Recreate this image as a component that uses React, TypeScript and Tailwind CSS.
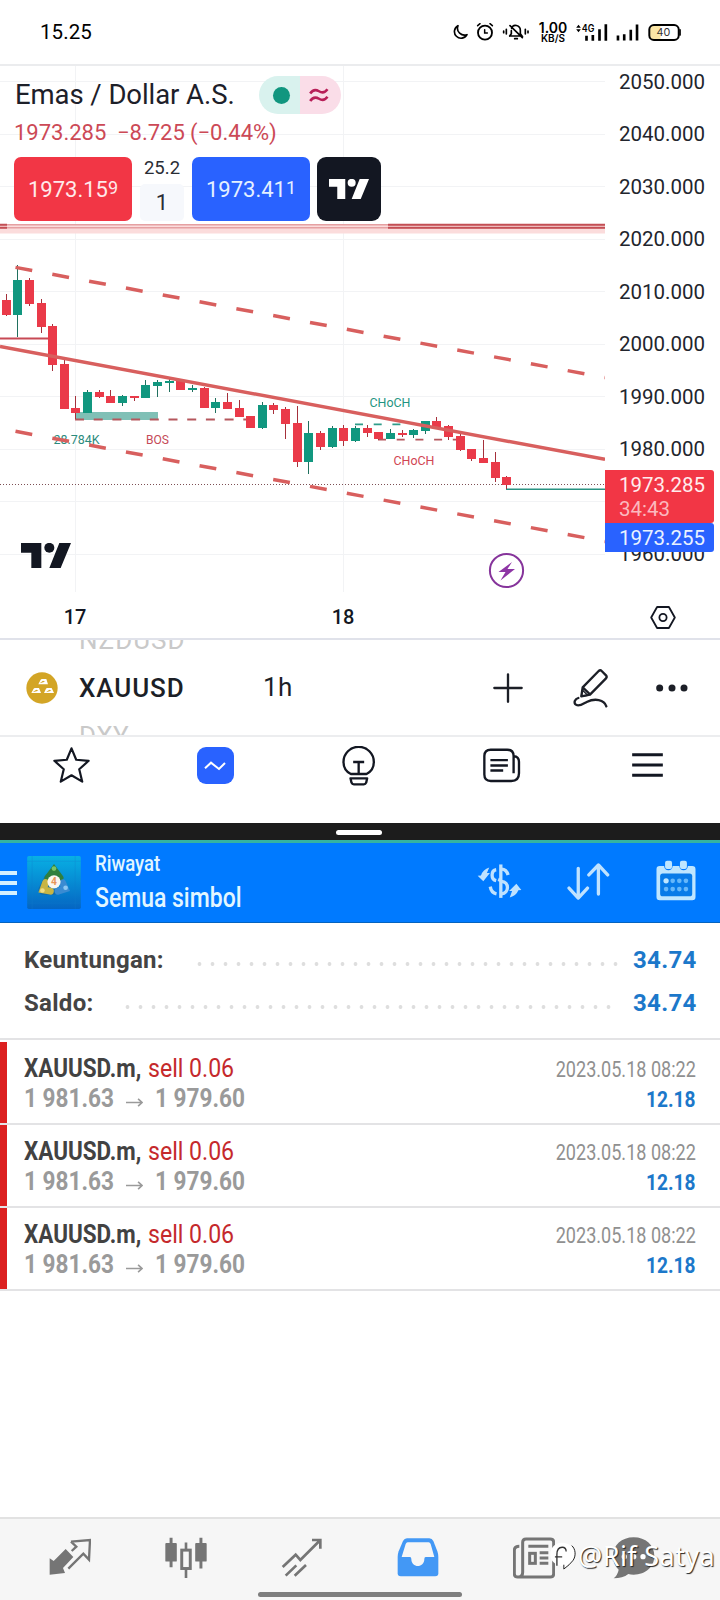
import type { ReactNode } from "react";

type Candle = [x: number, high: number, top: number, bottom: number, low: number, up?: boolean];

const candles: Candle[] = [
  [6.5, 294, 300, 315, 316],
  [17.5, 265, 280, 315, 337, true],
  [29.5, 278, 280, 304, 306],
  [41.5, 299, 303, 327, 333],
  [52.5, 324, 326, 365, 371],
  [64.5, 358, 364, 409, 409],
  [75.5, 396, 408, 413, 419],
  [87.5, 390, 392, 413, 413, true],
  [99.5, 390, 392, 397, 398],
  [110.5, 390, 396, 403, 403],
  [122.5, 395, 396, 403, 406, true],
  [134.5, 396, 396, 398, 401],
  [145.5, 380, 385, 398, 398, true],
  [157.5, 380, 382, 386, 397, true],
  [169.5, 379, 381, 383, 392, true],
  [180.5, 380, 381, 390, 390],
  [192.5, 385, 388, 390, 392, true],
  [204.5, 387, 388, 408, 408],
  [215.5, 398, 402, 408, 413, true],
  [227.5, 393, 402, 409, 409],
  [239.5, 400, 408, 417, 417],
  [250.5, 416, 416, 428, 428],
  [262.5, 402, 405, 428, 429, true],
  [273.5, 403, 405, 410, 414],
  [285.5, 407, 409, 424, 439],
  [297.5, 406, 423, 462, 467],
  [308.5, 421, 433, 462, 474, true],
  [320.5, 431, 433, 447, 450],
  [332.5, 426, 428, 447, 448, true],
  [343.5, 425, 428, 441, 446],
  [355.5, 426, 428, 441, 442, true],
  [367.5, 425, 428, 433, 437],
  [378.5, 432, 432, 439, 440],
  [390.5, 429, 433, 439, 439, true],
  [402.5, 430, 433, 435, 437],
  [413.5, 429, 430, 435, 438, true],
  [425.5, 421, 421, 431, 434, true],
  [436.5, 417, 421, 428, 428],
  [448.5, 425, 426, 437, 440],
  [460.5, 433, 436, 450, 451],
  [471.5, 449, 449, 459, 461],
  [483.5, 440, 458, 463, 463],
  [495.5, 452, 462, 478, 482],
  [506.5, 476, 477, 485, 489],
];

const prices = [
  "2050.000",
  "2040.000",
  "2030.000",
  "2020.000",
  "2010.000",
  "2000.000",
  "1990.000",
  "1980.000",
  "1970.000",
  "1960.000",
];

const trades = [1, 2, 3];

function TvLogo({ className }: { className: string }) {
  return (
    <svg viewBox="62 189 150 75" className={className} fill="currentColor">
      <path d="M62 189h61v75H93v-46H62zM177 189h35l-31 75h-34z" />
      <circle cx="147" cy="203.500" r="15" />
    </svg>
  );
}

function StatusBar() {
  return (
    <header className="flex h-[66px] items-center justify-between border-b-2 border-[#ebecee] pl-10 pr-[38px] text-black">
      <span className="text-[20.5px] tracking-[0.1px]">15.25</span>
      <div className="flex items-center">
        <svg viewBox="217 72 48 48" className="h-4 w-4" fill="none" stroke="currentColor" strokeWidth="5" strokeLinejoin="round">
          <path d="M235 77a20 20 0 1 0 27 27c-16 6-34-9-27-27z" />
        </svg>
        <svg viewBox="288 70 54 54" className="ml-2 h-[18px] w-[18px]" fill="none" stroke="currentColor" strokeWidth="5.500" strokeLinecap="round">
          <circle cx="315" cy="99" r="21" />
          <path d="M314 90v10h8M293 78l7-6M330 72l7 6" strokeWidth="4.500" />
        </svg>
        <svg viewBox="366 70 84 54" className="ml-2 h-[18px] w-7" fill="none" stroke="currentColor" strokeWidth="5" strokeLinecap="round">
          <path d="M371 94v5M379 89v14M436 89v14M444 94v5M389 109h37l-5-7V92c0-16-22-21-26-6M394 93v9l-5 7M390 78l37 36M404 117h8" />
        </svg>
        <div className="ml-2 flex w-[30px] flex-col items-center text-center font-['Inter'] font-semibold">
          <span className="text-[14px] leading-[12px]">1.00</span>
          <span className="text-[10px] leading-[9px]">KB/S</span>
        </div>
        <svg viewBox="582 68 98 54" className="ml-[7px] h-[18px] w-[33px]" fill="currentColor">
          <path d="M585 82l7-9 7 9zM585 87l7 9 7-9z" />
          <text x="602" y="95" fontSize="29" fontWeight="600" fontFamily="Inter" textLength="38" lengthAdjust="spacingAndGlyphs">4G</text>
          <path d="M612 106h8v15h-8zM631 104h8v17h-8zM651 87h8v34h-8zM670 72h8v49h-8z" />
        </svg>
        <svg viewBox="706 68 70 54" className="ml-2 h-[18px] w-[23px]" fill="currentColor">
          <path d="M708 106h8v15h-8zM727 102h8v19h-8zM747 88h8v33h-8zM766 72h8v49h-8z" />
        </svg>
        <svg viewBox="803 70 102 52" className="ml-[9px] h-[17px] w-[34px]" fill="none">
          <path d="M820 75h20v42h-20q-12 0-12-12V87q0-12 12-12z" fill="#fbe6a6" />
          <rect x="806" y="73" width="90" height="46" rx="14" stroke="currentColor" strokeWidth="6" />
          <path d="M900 88v16" stroke="currentColor" strokeWidth="5" strokeLinecap="round" />
          <text x="849" y="107" fontSize="33" fill="#333" textAnchor="middle" fontFamily="Inter">40</text>
        </svg>
      </div>
    </header>
  );
}

function Chart() {
  return (
    <svg viewBox="0 66 605 526" className="block h-[526px] w-[605px]" fontFamily="Roboto">
      <g stroke="#f2f3f5">
        {prices.map((p, i) => (
          <path key={p} d={`M0 ${Math.round(81 + i * 52.5) + 0.5}H605`} />
        ))}
        <path d="M75.500 66V592M343.500 66V592" />
      </g>

      <path d="M0 224h605v9.500H0z" fill="#fbdcdc" />
      <path d="M0 224.800h605M0 227.700h605" stroke="#e5a0a2" strokeWidth="1.600" />
      <path d="M0 224.800h7M388 224.800h217M0 227.700h7M388 227.700h217" stroke="#c34f55" strokeWidth="2" />

      <path d="M76 412h82v8H76z" fill="#80c0b6" />
      <path d="M75 419.500H250" stroke="#b5575d" strokeWidth="2" strokeDasharray="9 9.700" />
      <path d="M0 338.600H48" stroke="#c74955" strokeWidth="2" />
      <path d="M355 424.400H403" stroke="#2f9c8a" strokeWidth="1.800" strokeDasharray="8 10.700" />
      <path d="M378 439.700H457" stroke="#b5575d" strokeWidth="1.800" strokeDasharray="8 10.700" />
      <path d="M0 484.500H605" stroke="#7d5055" strokeDasharray="1 2" />
      <path d="M506 489.300H605" stroke="#2a9483" strokeWidth="1.500" />

      {candles.map(([x, high, top, bottom, low, up]) => (
        <g key={x} fill={up ? "#11977f" : "#ea3a49"}>
          <rect x={x - 0.5} y={high} width="1" height={low - high} fill={up ? "#20705f" : "#a5303b"} />
          <rect x={x - 4.5} y={top} width="9" height={bottom - top} />
        </g>
      ))}

      <g fontSize="12.500" textAnchor="middle">
        <text x="76.500" y="444" fill="#2b8b7d" textLength="46" lengthAdjust="spacingAndGlyphs">28.784K</text>
        <text x="157.500" y="444" fill="#c54a58" textLength="23" lengthAdjust="spacingAndGlyphs">BOS</text>
        <text x="390" y="407" fill="#1f9482" textLength="41" lengthAdjust="spacingAndGlyphs">CHoCH</text>
        <text x="414" y="465" fill="#d14452" textLength="41" lengthAdjust="spacingAndGlyphs">CHoCH</text>
      </g>

      <g stroke="#d85f5e" strokeWidth="3.500">
        <path d="M0 346.400L605 459.400" />
        <path d="M15.500 267.400L605 377.600M15.500 431.300L605 541.500" strokeDasharray="17 20.450" />
      </g>

      <circle cx="506.500" cy="570.500" r="16.600" fill="#fff" stroke="#86349b" strokeWidth="2" />
      <path d="M512 562l-13.500 10h7l-5 8.500 14.500-11.500h-7.500z" fill="#8e35a5" />
    </svg>
  );
}

function Legend() {
  return (
    <div className="absolute left-[14px] top-[10px]">
      <div className="flex h-[38px] items-center">
        <h1 className="w-[245px] whitespace-nowrap pl-px text-[27.5px] tracking-[-0.07px] text-[#1d2029]">Emas / Dollar A.S.</h1>
        <div className="flex h-[38px] overflow-hidden rounded-full">
          <div className="flex w-[41px] items-center justify-center bg-[#d9f2ee]">
            <div className="ml-[3px] h-[17px] w-[17px] rounded-full bg-[#11967f]" />
          </div>
          <div className="flex w-[41px] items-center bg-[#fadde8] pl-[9px]">
            <svg viewBox="0 0 60 46" className="h-[15px] w-5" fill="none" stroke="#b81f58" strokeWidth="8">
              <path d="M3 17C12 3 22 5 30 10S48 15 56 4M3 40C12 26 22 28 30 33S48 38 56 27" />
            </svg>
          </div>
        </div>
      </div>
      <p className="flex h-9 items-center whitespace-nowrap text-[22px] text-[#cc4956]">
        <span className="w-[103px]">1973.285</span>
        <span className="w-[73px]">−8.725</span>
        <span>(−0.44%)</span>
      </p>
      <div className="mt-[7px] flex h-16">
        <button className="flex w-[118px] items-center justify-center rounded-[7px] bg-[#f23645] text-[22px] text-[#ffe9ea]">
          1973.15<span className="mb-1 text-[18px]">9</span>
        </button>
        <div className="mx-2 flex w-11 flex-col items-center text-[#2a2d35]">
          <span className="h-[27px] text-[18.5px] leading-[22px]">25.2</span>
          <span className="flex h-[37px] w-full items-center justify-center rounded-[5px] bg-[#f6f8fc] text-[22px]">1</span>
        </div>
        <button className="flex w-[118px] items-center justify-center rounded-[7px] bg-[#2962ff] text-[22px] text-[#e4f0ff]">
          1973.41<span className="mb-1 text-[18px]">1</span>
        </button>
        <button className="ml-[7px] flex w-16 items-center justify-center rounded-[9px] bg-[#131722] text-white">
          <TvLogo className="h-[20px] w-[40px]" />
        </button>
      </div>
    </div>
  );
}

function PriceAxis() {
  return (
    <div className="relative w-[115px] text-[20.5px] text-[#22252d]">
      <ul className="-mt-[10px]">
        {prices.map((price) => (
          <li key={price} className="flex h-[52.5px] items-center pl-[14px]">
            {price}
          </li>
        ))}
      </ul>
      <div className="absolute left-0 top-[404px] w-[109px]">
        <div className="h-[53px] rounded-r-[3px] bg-[#f23645] pl-[14px] pt-[3px] leading-6 text-[#ffeced]">
          <p>1973.285</p>
          <p className="text-[#fbb9bf]">34:43</p>
        </div>
        <div className="flex h-[29px] items-center rounded-r-[3px] bg-[#2962ff] pl-[14px] pt-px text-[#e9f2ff]">1973.255</div>
      </div>
    </div>
  );
}

function SymbolBar() {
  return (
    <div className="flex h-[97px] items-center overflow-hidden border-b-2 border-[#ecedef] text-[#1c1f27]">
      <svg viewBox="0 0 96 96" className="ml-[26px] h-8 w-8">
        <circle cx="48" cy="48" r="47" fill="#d3a526" />
        <g fill="#fff">
          <path d="M37 37l7-14q1-2 4-2h13l5 16zM16 63l7-13q1-2 4-2h12l6 15zM54 63l6-13q1-2 4-2h13l7 15z" />
        </g>
        <path d="M41 34l10-8 6 3zM20 61l11-8 6 3zM60 61l10-8 6 3z" fill="#d3a526" />
      </svg>
      <div className="ml-[21px] h-[95px] w-[184px] overflow-hidden">
        <ul className="-mt-6 text-[26px] leading-[48px]">
          <li className="tracking-[1px] text-[#c9c9c9]">NZDUSD</li>
          <li className="font-medium tracking-[0.9px]">XAUUSD</li>
          <li className="tracking-[0.5px] text-[#c9c9c9]">DXY</li>
        </ul>
      </div>
      <span className="w-[230px] text-[26px] tracking-[0.5px]">1h</span>
      <svg viewBox="0 0 90 90" className="h-[30px] w-[30px]" stroke="currentColor" strokeWidth="7" strokeLinecap="round">
        <path d="M45 4v82M4 45h82" />
      </svg>
      <svg viewBox="578 110 108 120" className="ml-[50px] h-10 w-9" fill="none" stroke="currentColor" strokeWidth="7" strokeLinejoin="round" strokeLinecap="round">
        <path d="M655 119q5-4 9 0l13 13q4 5 0 9l-48 49-26 5 4-27zM608 169l21 20" />
        <path d="M603 195l3-19 16 16z" strokeWidth="4" />
        <path d="M594 200c-10 3-14 12-9 19 9 10 24-2 34-7 24-12 53-8 59 13" />
      </svg>
      <svg viewBox="827 160 96 24" className="ml-[47px] h-2 w-8" fill="currentColor">
        <circle cx="838" cy="172" r="10.500" />
        <circle cx="875" cy="172" r="10.500" />
        <circle cx="911" cy="172" r="10.500" />
      </svg>
    </div>
  );
}

function TradingViewNav() {
  return (
    <nav className="grid h-[86px] grid-cols-5 justify-items-center pr-[3px] pt-[9px] text-[#131722]">
      <svg viewBox="157 797 116 116" className="h-[39px] w-[39px]" fill="none" stroke="currentColor" strokeWidth="6.500" strokeLinejoin="round">
        <path d="M215 804l14 34 37 3-28 25 9 37-32-19-32 19 9-37-28-25 37-3z" />
      </svg>
      <div className="mt-[1px] flex h-[37px] w-[37px] items-center justify-center self-start rounded-[9px] bg-[#2962ff]">
        <svg viewBox="0 0 64 30" className="h-[10px] w-[22px]" fill="none" stroke="#fff" strokeWidth="6">
          <path d="M2 22L20 5l24 19L62 6" />
        </svg>
      </div>
      <svg viewBox="1020 799 116 120" className="h-10 w-[39px]" fill="none" stroke="currentColor" strokeWidth="7" strokeLinejoin="round">
        <path d="M1055 883c-14-7-22-21-22-36a45.500 45.500 0 0 1 91 0c0 15-8 29-22 36zM1062 847h33M1078.500 847v36M1054 896h50l-3 13q-2 5-7 5h-30q-5 0-7-5z" />
      </svg>
      <svg viewBox="312 349 116 116" className="h-[39px] w-[39px]" fill="none" stroke="currentColor" strokeWidth="7">
        <path d="M406 430V379q0-19-19-19h-49q-19 0-19 19v55q0 19 19 19h61q23 0 23-23v-34q0-16-16-17M337 391h52M337 407h52M337 422h38" />
      </svg>
      <svg viewBox="0 0 92 72" className="ml-[5px] mt-[7px] h-6 w-[31px]" stroke="currentColor" strokeWidth="9">
        <path d="M0 5h92M0 36h92M0 67h92" />
      </svg>
    </nav>
  );
}

function MetaTraderHeader() {
  return (
    <div className="flex h-[83px] border-b border-t-[3px] border-b-[#0563bf] border-t-[#35b3a0] bg-[#007aff] text-[#e2f6ff]">
      <div className="mt-[28px] flex h-6 w-[17px] flex-col justify-between">
        <div className="h-1 bg-[#d3f0ff]" />
        <div className="h-1 bg-[#d3f0ff]" />
        <div className="h-1 bg-[#d3f0ff]" />
      </div>
      <svg viewBox="81 122 162 160" className="ml-[10px] mt-[13px] h-[53px] w-[54px]">
        <defs>
          <linearGradient id="tile" x1="0" y1="0" x2="0" y2="1">
            <stop offset="0" stopColor="#08b0e4" />
            <stop offset="1" stopColor="#0565c2" />
          </linearGradient>
        </defs>
        <rect x="81" y="122" width="162" height="160" rx="5" fill="url(#tile)" />
        <path d="M96 122v160M226 122v160M81 138h162M81 264h162" stroke="#1480cf" strokeWidth="1.500" opacity=".6" />
        <g strokeLinecap="round" fill="none">
          <path d="M130 224L147 190M130 224l32 0" stroke="#1d5c86" strokeWidth="30" opacity=".5" />
          <path d="M144 188l18-24 18 24" stroke="#2f7f3e" strokeWidth="21" />
          <path d="M137 202l-8 22 22 4" stroke="#c8b544" strokeWidth="21" />
          <path d="M188 203l8 18-22 7" stroke="#3a8bd2" strokeWidth="21" />
        </g>
        <circle cx="162" cy="160" r="7" fill="#7ac466" />
        <circle cx="127" cy="226" r="7" fill="#f0dc84" />
        <circle cx="197" cy="218" r="7" fill="#8cc8f3" />
        <circle cx="162" cy="200" r="20" fill="#fbf7ef" />
        <text x="162" y="211" fontSize="31" fontWeight="700" textAnchor="middle" fill="#e8955a" fontFamily="Roboto">4</text>
      </svg>
      <div className="ml-[14px] mt-[4px] w-[382px] whitespace-nowrap">
        <p className="w-max origin-left scale-x-[0.825] text-[22.5px] font-medium leading-[33px]">Riwayat</p>
        <p className="w-max origin-left scale-x-[0.82] text-[28px] font-medium leading-[35px]">Semua simbol</p>
      </div>
      <svg viewBox="352 144 136 108" className="mt-[20px] h-9 w-[45px]" fill="none" stroke="#bfe2ff" strokeWidth="10">
        <path d="M424 148v101" strokeWidth="10" />
        <path d="M410 164c-16 2-17 29 0 33M392 215c2 12 9 20 19 22M424 162c13-1 19 7 22 18M426 199c24 2 24 35 0 38M424 196l-8-3" />
        <path d="M389 157l-7 17h9l-20 25-17-17 10-1q6-18 25-24zM451 248l7-20h-9l22-22 15 19-9 1q-6 16-26 22z" fill="#bfe2ff" stroke="none" />
      </svg>
      <svg viewBox="621 144 128 112" className="ml-[45px] mt-[20px] h-[37px] w-[43px]" fill="none" stroke="#bfe2ff" strokeWidth="10" strokeLinecap="round" strokeLinejoin="round">
        <path d="M654 160v90M626 220l28 30 28-30M715 238v-87M686 180l29-30 28 30" />
      </svg>
      <svg viewBox="888 136 120 124" className="ml-[46px] mt-[17px] h-[41px] w-10" fill="#bfe6ff">
        <path d="M899 154h13q2 13 13 13t13-13h20q2 13 13 13t13-13h13q10 0 10 10v84q0 10-10 10h-98q-10 0-10-10v-84q0-10 10-10z" />
        <rect x="915" y="138" width="21" height="25" rx="6" />
        <rect x="960" y="138" width="21" height="25" rx="6" />
        <rect x="900" y="177" width="97" height="69" rx="8" fill="#087be8" />
        <circle cx="918" cy="199" r="8" />
        <g fill="#65b7fa">
          <circle cx="938" cy="199" r="7" />
          <circle cx="958" cy="199" r="7" />
          <circle cx="978" cy="199" r="7" />
          <circle cx="918" cy="224" r="7" />
          <circle cx="938" cy="224" r="7" />
          <circle cx="958" cy="224" r="7" />
          <circle cx="978" cy="224" r="7" />
        </g>
      </svg>
    </div>
  );
}

function SummaryRow({ label, value, children }: { label: string; value: string; children: ReactNode }) {
  return (
    <div className="flex h-[43px] items-center justify-between text-2xl font-bold">
      <span className="tracking-[0.3px] text-[#444]">{label}</span>
      <div className="flex items-center">
        {children}
        <span className="w-[63px] tracking-[0.3px] text-[#1c78ca]">{value}</span>
      </div>
    </div>
  );
}

function TradeRow() {
  return (
    <li className="flex h-[83px] border-b-2 border-[#e3e3e5]">
      <div className="w-[7px] bg-[#dc2020]" />
      <div className="ml-[17px] flex-1 whitespace-nowrap pt-[11px]">
        <div className="flex h-[30px] items-center text-[25.5px]">
          <div className="w-[124px]">
            <span className="inline-block origin-left scale-x-[0.88] font-bold text-[#424242]">XAUUSD.m,</span>
          </div>
          <span className="inline-block origin-left scale-x-[0.905] text-[#c5292c]">sell 0.06</span>
        </div>
        <div className="flex h-[31px] items-center text-[26px] font-bold text-[#9a9a9a]">
          <div className="w-[102px]">
            <span className="inline-block origin-left scale-x-[0.87]">1 981.63</span>
          </div>
          <svg viewBox="0 0 52 26" className="mt-2 h-[9px] w-[17px]" fill="none" stroke="currentColor" strokeWidth="5">
            <path d="M0 13h49M37 2l12 11-12 11" />
          </svg>
          <span className="ml-[12px] inline-block origin-left scale-x-[0.87]">1 979.60</span>
        </div>
      </div>
      <div className="flex flex-col items-end whitespace-nowrap pr-6 pt-[12px]">
        <span className="origin-right scale-x-[0.84] text-[21.5px] leading-[31px] text-[#909090]">2023.05.18 08:22</span>
        <span className="origin-right scale-x-[0.89] text-[21.5px] font-bold leading-[29px] text-[#1c78ca]">12.18</span>
      </div>
    </li>
  );
}

function MetaTraderTabs() {
  return (
    <footer className="relative flex h-[83px] flex-col border-t-2 border-[#e2e2e2] bg-[#f6f6f6]">
      <nav className="flex h-[73px] pl-3 pt-[18px] text-[#757575]">
        <div className="flex w-[116px] justify-center">
          <svg viewBox="148 115 126 120" className="h-10 w-[42px]" fill="currentColor">
            <path d="M198 151l23 24-31 33 6 15-46 5v-49l12 8z" />
            <path d="M214 129l57-5-3 59-17-18-45 45M214 129l16 15-14 13" fill="none" stroke="currentColor" strokeWidth="7" />
          </svg>
        </div>
        <div className="flex w-[116px] justify-center">
          <svg viewBox="495 111 126 128" className="h-[42px] w-[42px]" fill="currentColor">
            <path d="M508 113h9v90h-9zM599 113h9v94h-9zM554 128h8v22h-8zM554 208h8v28h-8z" />
            <rect x="495" y="129" width="35" height="57" rx="3" />
            <rect x="586" y="129" width="35" height="57" rx="3" />
            <rect x="545" y="151" width="26" height="56" fill="none" stroke="currentColor" strokeWidth="9" />
          </svg>
        </div>
        <div className="flex w-[116px] justify-center">
          <svg viewBox="843 113 126 120" className="h-10 w-[42px]" fill="none" stroke="currentColor" strokeWidth="8">
            <path d="M848 203l39-37 14 16 60-60M936 122h25v26M857 229l32-31M884 229l34-32" />
          </svg>
        </div>
        <div className="flex w-[116px] justify-center">
          <svg viewBox="111 113 126 120" className="h-10 w-[42px]">
            <path d="M141 117h67q8 0 12 8l12 31q3 8 3 17v49q0 9-9 9H122q-9 0-9-9v-49q0-9 3-17l13-31q4-8 12-8z" fill="#4398f5" />
            <path d="M143 129h63q4 0 6 5l11 39h-26q-4 0-4 6c0 28-39 28-39 0q0-6-4-6h-25l12-39q2-5 6-5z" fill="#f6f6f6" />
          </svg>
        </div>
        <div className="flex w-[116px] justify-center">
          <svg viewBox="459 111 126 126" className="h-[42px] w-[42px]" fill="none" stroke="currentColor" strokeWidth="9">
            <path d="M478 139q-15 0-15 12v70q0 10 10 10h98q10 0 10-10V127q0-10-10-10h-73q-10 0-10 10v90q0 13-12 14M505 139h60M539 158h26M539 174h26M539 190h26" />
            <rect x="509" y="160" width="17" height="30" />
          </svg>
        </div>
        <div className="flex w-[83px] justify-center">
          <svg viewBox="758 111 126 126" className="h-[42px] w-[42px]" fill="currentColor">
            <path d="M820 112c36 0 62 24 62 56s-26 56-62 56q-9 0-16-2-17 13-44 13 12-10 15-26-17-16-17-41c0-32 26-56 62-56z" />
            <g fill="#fff">
              <circle cx="792" cy="170" r="8" />
              <circle cx="820" cy="170" r="8" />
              <circle cx="848" cy="170" r="8" />
            </g>
          </svg>
        </div>
      </nav>
      <div className="h-[5px] w-[204px] self-center rounded-full bg-[#7e7e7e]" />
      <div className="absolute right-[5px] top-[19px] flex items-center">
        <svg viewBox="570 125 86 94" className="h-[31px] w-[29px]" fill="none">
          <path d="M608 130c24 0 39 15 39 36 0 20-16 33-35 46v-11c-23-1-39-15-39-35s14-36 35-36z" fill="#fff" />
          <path d="M638 139c12 10 14 32 3 46q-9 12-27 25v-13" stroke="#222" strokeWidth="3" />
          <path d="M593 200v-34q0-22 16-22 12 0 12 13M587 173h22" stroke="#333" strokeWidth="4" />
        </svg>
        <span className="whitespace-nowrap font-['Noto_Sans'] text-[27px] leading-9 tracking-[0.4px] text-white [text-shadow:1px_1px_1px_#222]">@Rif Satya</span>
      </div>
    </footer>
  );
}

export default function App() {
  return (
    <div className="flex h-[1600px] w-[720px] flex-col overflow-hidden bg-white font-['Roboto',sans-serif]">
      <StatusBar />

      <section className="flex h-[526px]">
        <div className="relative w-[605px]">
          <Chart />
          <Legend />
          <TvLogo className="absolute left-[21px] top-[477px] h-[25px] w-[50px] text-[#131722]" />
        </div>
        <PriceAxis />
      </section>

      <div className="flex h-12 items-center border-b-2 border-[#e0e2ea] pt-1 text-[20px] font-medium text-[#131722]">
        <span className="ml-[55px] w-10 text-center">17</span>
        <span className="ml-[228px] w-10 text-center">18</span>
        <svg viewBox="632 616 78 70" className="ml-[287px] h-[23px] w-[26px]" fill="none" stroke="currentColor" strokeWidth="5.500" strokeLinejoin="round">
          <path d="M653 619h36l18 32-18 32h-36l-18-32z" />
          <circle cx="671" cy="651" r="11" />
        </svg>
      </div>

      <SymbolBar />
      <TradingViewNav />

      <div className="flex h-[17px] items-center justify-center bg-[#1c1c1c] pr-[2px]">
        <div className="mt-[2px] h-[5px] w-[46px] rounded-sm bg-white" />
      </div>

      <MetaTraderHeader />

      <section className="h-[117px] border-b-2 border-[#e3e3e5] pl-6 pr-6 pt-[15px]">
        <SummaryRow label="Keuntungan:" value="34.74">
          <div className="mr-[11px] mt-[9px] h-[4px] w-[429px] bg-[radial-gradient(circle,#dedede_1.6px,transparent_2.2px)] bg-[length:13px_4px] bg-repeat-x" />
        </SummaryRow>
        <SummaryRow label="Saldo:" value="34.74">
          <div className="mr-[18px] mt-[9px] h-[4px] w-[494px] bg-[radial-gradient(circle,#dedede_1.6px,transparent_2.2px)] bg-[length:13px_4px] bg-repeat-x" />
        </SummaryRow>
      </section>

      <ul className="flex-1 pt-[2px]">
        {trades.map((id) => (
          <TradeRow key={id} />
        ))}
      </ul>

      <MetaTraderTabs />
    </div>
  );
}
